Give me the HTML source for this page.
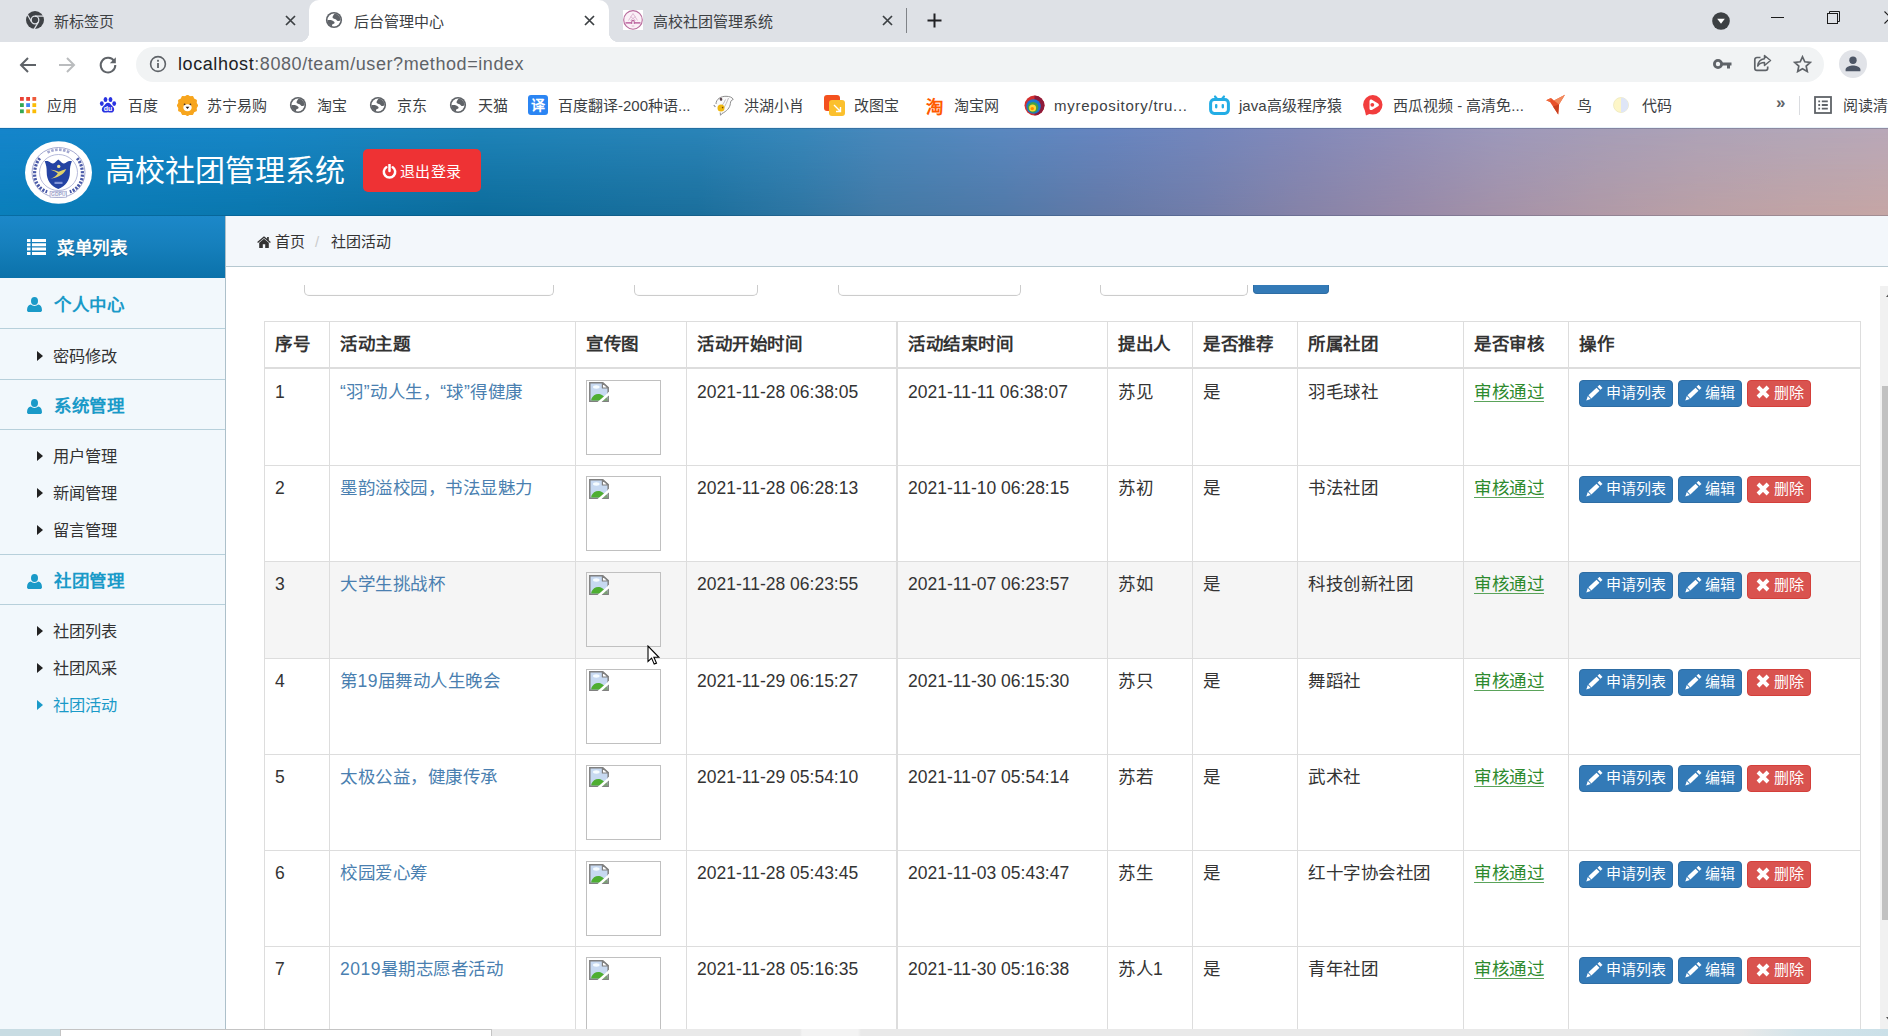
<!DOCTYPE html>
<html lang="zh-CN">
<head>
<meta charset="utf-8">
<title>后台管理中心</title>
<style>
*{box-sizing:border-box;margin:0;padding:0}
html,body{width:1888px;height:1036px;overflow:hidden;background:#fff}
body{position:relative;font-family:"Liberation Sans",sans-serif;color:#333;font-size:17.5px}
.abs{position:absolute}
/* ---------- browser chrome ---------- */
#tabstrip{position:absolute;left:0;top:0;width:1888px;height:42px;background:#dee1e6}
#toolbar{position:absolute;left:0;top:42px;width:1888px;height:46px;background:#fff}
#bookmarks{position:absolute;left:0;top:88px;width:1888px;height:39px;background:#fff}
.tab-title{position:absolute;top:11px;font-size:15px;line-height:22px;color:#3c4043;white-space:nowrap}
.tab-x{position:absolute;top:14px;width:11px;height:11px}
#activetab{position:absolute;left:309px;top:0;width:300px;height:42px;background:#fff;border-radius:10px 10px 0 0}
#activetab:before,#activetab:after{content:"";position:absolute;bottom:0;width:10px;height:10px;background:radial-gradient(circle at 0 0,#dee1e6 10px,#fff 10.5px)}
#activetab:before{left:-10px}
#activetab:after{right:-10px;background:radial-gradient(circle at 100% 0,#dee1e6 10px,#fff 10.5px)}
#urlbox{position:absolute;left:136px;top:5px;width:1688px;height:35px;border-radius:17.5px;background:#f1f3f4}
#url{position:absolute;left:42px;top:5px;font-size:18px;line-height:24px;color:#5f6368;white-space:nowrap;letter-spacing:0.58px}
#url b{font-weight:normal;color:#202124}
.bm{position:absolute;top:7px;font-size:15px;line-height:22px;color:#3c4043;white-space:nowrap}
.bmi{position:absolute;top:7px;width:20px;height:20px}
/* ---------- page ---------- */
#page{position:absolute;left:0;top:127px;width:1888px;height:902px;background:#fff;overflow:hidden}

#hdr{position:absolute;left:0;top:1px;width:1888px;height:88px;background:linear-gradient(to right,#0a7fbb 0%,#0a77ae 13.2%,#0c6c9b 25.4%,#1b6f9c 37%,#2e75a2 42.4%,#4279a5 46.6%,#5079a8 53%,#6379a7 58.3%,#727da9 63.6%,#8683a8 68.9%,#9689a8 74.2%,#a592a8 79.4%,#b19aa7 84.7%,#bba0a6 90%,#c2a4a5 95.3%,#c6a6a5 100%);box-shadow:inset 0 -1px 0 rgba(0,30,60,.18)}
#hdr:before{content:"";position:absolute;inset:0;background:linear-gradient(to right,#1585cb 0%,#1786c6 13.2%,#1e83b8 25.4%,#2a84b8 37%,#3887ba 42.4%,#4888bc 46.6%,#5a88bf 53%,#6685bf 58.3%,#7386bc 63.6%,#8289b9 68.9%,#908fb8 74.2%,#9c98ba 79.4%,#a59db7 84.7%,#ada2b7 90%,#b2a6b8 95.3%,#b8a8b8 100%);-webkit-mask-image:linear-gradient(to bottom,#000 0,rgba(0,0,0,0) 100%);mask-image:linear-gradient(to bottom,#000 0,rgba(0,0,0,0) 100%)}
#hdrline{position:absolute;left:0;top:0;width:1888px;height:2px;background:linear-gradient(to bottom,#e9f2f9 0,#e9f2f9 1px,rgba(10,40,80,.22) 1px,rgba(10,40,80,.22) 2px);z-index:3}
#title{position:absolute;left:105px;top:22px;font-size:30px;line-height:42px;color:#fff;white-space:nowrap;letter-spacing:0}
#logout{position:absolute;left:363px;top:20.500px;width:118px;height:43.500px;border-radius:5px;background:#ee3234;color:#fff;font-size:15px;line-height:46px;white-space:nowrap;letter-spacing:.3px}
#side{position:absolute;left:0;top:89px;width:226px;height:813px;background:#f2f8fc;border-right:1px solid #adc0ca}
#menuhd{position:absolute;left:0;top:0;width:225px;height:62px;background:linear-gradient(to bottom,#1c88c9 0,#1680bd 45%,#0b72aa 100%);color:#fff;font-weight:bold;font-size:17.5px;line-height:62px;letter-spacing:.5px}
.sec{position:absolute;left:0;width:225px;height:51px;border-bottom:1px solid #b7d0db;color:#1a9ac8;font-weight:bold;font-size:17.5px;line-height:54px;padding-left:54px;white-space:nowrap;letter-spacing:.5px}
.sec.bt{border-top:1px solid #b7d0db;height:51px;line-height:53px}
.sub{position:absolute;left:53px;font-size:16.25px;line-height:24px;color:#333;white-space:nowrap}
.sub:before{content:"";position:absolute;left:-16px;top:7px;border-left:6px solid #222;border-top:5px solid transparent;border-bottom:5px solid transparent}
.sub.on{color:#1a9ac8}.sub.on:before{border-left-color:#1a9ac8}
#crumb{position:absolute;left:226px;top:89px;width:1662px;height:51px;background:#f3f7fb;border-bottom:1px solid #b6c8d0;font-size:15px;color:#333}
#main{position:absolute;left:226px;top:140px;width:1654px;height:762px;background:#fff;overflow:hidden}
.inp{position:absolute;top:18px;height:11px;border:1px solid #ccc;border-top:0;border-radius:0 0 5px 5px;background:#fff;box-shadow:inset 0 -1px 1px rgba(0,0,0,.02)}
table{position:absolute;left:38px;top:54px;border-collapse:collapse;table-layout:fixed;width:1597px;font-size:17.5px;line-height:25px;color:#333}
td,th{border:1px solid #ddd;padding:11px 10px 7px;vertical-align:top;text-align:left;white-space:nowrap;overflow:hidden}
th{font-weight:bold;height:46px;border-bottom:2px solid #ddd;padding:10px 10px 7px}
tbody tr{height:96.25px}tbody tr:first-child{height:98.100px}tbody tr:not(:first-child) td{padding-top:10px}
tr.hov td{background:#f5f5f5}
td,th{letter-spacing:.5px}td:nth-child(1),td:nth-child(4),td:nth-child(5){letter-spacing:0}td a{color:#4a7fb0;text-decoration:none}
td a.g{color:#2d8a2d;text-decoration:underline;text-decoration-thickness:1px;text-underline-offset:2.500px;text-decoration-color:#5aa35a}
.img{display:block;width:75px;height:75px;border:1px solid #c0c0c0;position:relative;margin-top:0}
.btn{letter-spacing:0;display:inline-block;height:27px;line-height:23px;border-radius:4px;color:#fff;font-size:15px;padding:0 6.5px;margin-right:5px;vertical-align:top;margin-top:0;border:1px solid}
.b1{background:#337ab7;border-color:#2e6da4}.b2{background:#d9534f;border-color:#d43f3a}

#vscroll{position:absolute;left:1880px;top:286px;width:8px;height:743px;background:#f1f1f1}
#vscroll:before{content:"";position:absolute;left:2px;top:100px;width:6px;height:534px;background:#c1c1c1}
#bottom{position:absolute;left:0;top:1029px;width:1888px;height:7px;background:linear-gradient(to right,#c8dce3 0,#c8dce3 60px,#e9e9e9 60px,#e9e9e9 800px,#f3f3f3 802px,#f3f3f3 858px,#e9e9e9 861px,#e9e9e9 1740px,#d3e4ea 1800px,#cbe0e8 1888px)}
#bottom:before{content:"";position:absolute;left:60px;top:0;width:430px;height:7px;background:#fff;border:1px solid #c4c4c4;border-bottom:0}
</style>
</head>
<body>
<div id="tabstrip">
  <div id="activetab"></div>
  <!-- tab 1 -->
  <svg class="abs" style="left:25px;top:10px" width="20" height="20" viewBox="0 0 20 20"><circle cx="10" cy="10" r="9" fill="#3f4246"/><g stroke="#dee1e6" stroke-width="1.300" fill="none"><path d="M10 6.100H19.500"/><path d="M10 6.100H19.500" transform="rotate(120 10 10)"/><path d="M10 6.100H19.500" transform="rotate(240 10 10)"/><circle cx="10" cy="10" r="3.800"/></g></svg>
  <div class="tab-title" style="left:54px">新标签页</div>
  <svg class="abs" style="left:285px;top:15px" width="11" height="11" viewBox="0 0 11 11"><path d="M1 1l9 9M10 1l-9 9" stroke="#3c4043" stroke-width="1.7" fill="none"/></svg>
  <!-- tab 2 -->
  <svg class="abs" style="left:325px;top:11px" width="18" height="18" viewBox="0 0 20 20"><circle cx="10" cy="10" r="9" fill="#5f6368"/><circle cx="10" cy="10" r="7.200" fill="#fff"/><path d="M10.800 2.800C9.500 4.500 8.100 6 8.400 7.300c.3 1.300 2.100 1.300 3.400 1.900 1.200.6 1.200 1.800 2.400 2 1.300.2 2.400-.5 3.100-1.200A7.300 7.300 0 0 0 10.800 2.800z" fill="#5f6368"/><path d="M2.700 10.200C4.500 10 6.500 10 8 10.500c1.500.5 2.600 1.300 2.700 2.500.1 1-1.700 1-2.400 1.800-.6.700-.5 1.400-.3 2.300A7.300 7.300 0 0 1 2.700 10.200z" fill="#5f6368"/></svg>
  <div class="tab-title" style="left:354px">后台管理中心</div>
  <svg class="abs" style="left:584px;top:15px" width="11" height="11" viewBox="0 0 11 11"><path d="M1 1l9 9M10 1l-9 9" stroke="#3c4043" stroke-width="1.7" fill="none"/></svg>
  <!-- tab 3 -->
  <div class="abs" style="left:623px;top:10px;width:20px;height:20px;background:#fff"></div>
  <svg class="abs" style="left:623px;top:10px" width="20" height="20" viewBox="0 0 20 20"><circle cx="10" cy="9.900" r="9.300" fill="#fbf0f7" stroke="#b86c9d" stroke-width="1.100"/><path d="M10 3.500L5.500 10.500M10 3.500l4.500 7M7.500 6.500l5 4M12.500 6.500l-5 4" fill="none" stroke="#dcb3cf" stroke-width=".9"/><path d="M2.500 12h15v1.700h-15z" fill="#c678ac"/><path d="M8.300 14v-3.300c0-1 3.400-1 3.400 0V14z" fill="#b9639c"/><rect x="9.300" y="11.300" width="1.400" height="2.700" fill="#fff"/><rect x="8.700" y="15.600" width="2.600" height=".8" fill="#d9a9c6"/></svg>
  <div class="tab-title" style="left:653px">高校社团管理系统</div>
  <svg class="abs" style="left:882px;top:15px" width="11" height="11" viewBox="0 0 11 11"><path d="M1 1l9 9M10 1l-9 9" stroke="#3c4043" stroke-width="1.7" fill="none"/></svg>
  <div class="abs" style="left:906px;top:8px;width:1px;height:25px;background:#808388"></div>
  <svg class="abs" style="left:927px;top:13px" width="15" height="15" viewBox="0 0 15 15"><path d="M7.500 .5v14M.5 7.500h14" stroke="#202124" stroke-width="2" fill="none"/></svg>
  <!-- window controls -->
  <svg class="abs" style="left:1712px;top:12px" width="18" height="18" viewBox="0 0 18 18"><circle cx="9" cy="9" r="8.800" fill="#3c4043"/><path d="M5.200 6.800h7.600L9 11.800z" fill="#fff"/></svg>
  <div class="abs" style="left:1771px;top:17px;width:13px;height:1px;background:#1b1b1b"></div>
  <svg class="abs" style="left:1826px;top:10px" width="15" height="15" viewBox="0 0 15 15"><path d="M3.500 3.500V1.500h10v10h-2" fill="none" stroke="#1b1b1b" stroke-width="1"/><rect x="1.500" y="3.500" width="10" height="10" fill="none" stroke="#1b1b1b" stroke-width="1"/></svg>
  <svg class="abs" style="left:1884px;top:11px" width="13" height="13" viewBox="0 0 13 13"><path d="M.5 .5l12 12M12.500 .5l-12 12" stroke="#1b1b1b" stroke-width="1.100" fill="none"/></svg>
</div>
<div id="toolbar">
  <svg class="abs" style="left:18px;top:13px" width="20" height="20" viewBox="0 0 20 20"><path d="M18 10H3.500M10 3l-7 7 7 7" stroke="#5f6368" stroke-width="2" fill="none"/></svg>
  <svg class="abs" style="left:57px;top:13px" width="20" height="20" viewBox="0 0 20 20"><path d="M2 10h14.500M10 3l7 7-7 7" stroke="#babcbe" stroke-width="2" fill="none"/></svg>
  <svg class="abs" style="left:98px;top:13px" width="20" height="20" viewBox="0 0 20 20"><path d="M16.200 6.300A7.300 7.300 0 1 0 17.300 10" stroke="#5f6368" stroke-width="2" fill="none"/><path d="M17.800 2.200v6h-6z" fill="#5f6368"/></svg>
  <div id="urlbox">
    <svg class="abs" style="left:13px;top:8px" width="18" height="18" viewBox="0 0 18 18"><circle cx="9" cy="9" r="7.400" fill="none" stroke="#5f6368" stroke-width="1.600"/><rect x="8.100" y="8" width="1.800" height="5" fill="#5f6368"/><rect x="8.100" y="4.800" width="1.800" height="1.900" fill="#5f6368"/></svg>
    <div id="url"><b>localhost</b>:8080/team/user?method=index</div>
    <!-- key -->
    <svg class="abs" style="left:1577px;top:9px" width="19" height="17" viewBox="0 0 19 17"><circle cx="5" cy="8" r="3.600" fill="none" stroke="#5f6368" stroke-width="2.800"/><path d="M8 6.600h10.500v3H17v3h-3v-3H8z" fill="#5f6368"/></svg>
    <!-- share -->
    <svg class="abs" style="left:1617px;top:7px" width="19" height="19" viewBox="0 0 19 19"><path d="M7.500 3.500H4a2.200 2.200 0 0 0-2.200 2.200v8.500A2.200 2.200 0 0 0 4 16.400h8.500a2.200 2.200 0 0 0 2.200-2.200V12.500" fill="none" stroke="#5f6368" stroke-width="1.700"/><path d="M11.500 1.500L17.500 6.500l-6 5V8.500c-3.500 0-5.500 1.300-6.800 3.500.3-3.800 2.600-6.800 6.800-7.300z" fill="none" stroke="#5f6368" stroke-width="1.500" stroke-linejoin="round"/></svg>
    <!-- star -->
    <svg class="abs" style="left:1657px;top:8px" width="19" height="18" viewBox="0 0 19 18"><path d="M9.500 1.800l2.300 5 5.400.6-4 3.700 1.100 5.400-4.800-2.700-4.800 2.700 1.100-5.400-4-3.700 5.400-.6z" fill="none" stroke="#5f6368" stroke-width="1.700" stroke-linejoin="miter"/></svg>
  </div>
  <!-- avatar -->
  <div class="abs" style="left:1839px;top:8px;width:28px;height:28px;border-radius:50%;background:#e1e3e8"></div>
  <svg class="abs" style="left:1844px;top:13px" width="18" height="18" viewBox="0 0 18 18"><circle cx="9" cy="5.300" r="3.700" fill="#4d5666"/><path d="M1.600 16.200v-1.700c0-2.700 4.900-4 7.400-4s7.400 1.300 7.400 4v1.700z" fill="#4d5666"/></svg>
</div>
<div id="bookmarks">
  <svg class="abs" style="left:20px;top:8.500px" width="17" height="17" viewBox="0 0 17 17"><rect x="0.0" y="0.0" width="3.800" height="3.800" fill="#ea4335"/><rect x="6.2" y="0.0" width="3.800" height="3.800" fill="#ea4335"/><rect x="12.4" y="0.0" width="3.800" height="3.800" fill="#ee5a3a"/><rect x="0.0" y="6.2" width="3.800" height="3.800" fill="#34a853"/><rect x="6.2" y="6.2" width="3.800" height="3.800" fill="#4285f4"/><rect x="12.4" y="6.2" width="3.800" height="3.800" fill="#fbbc05"/><rect x="0.0" y="12.4" width="3.800" height="3.800" fill="#34a853"/><rect x="6.2" y="12.4" width="3.800" height="3.800" fill="#f2a01f"/><rect x="12.4" y="12.4" width="3.800" height="3.800" fill="#fbbc05"/></svg>
  <div class="bm" style="left:47px">应用</div>
  <!-- baidu -->
  <svg class="abs" style="left:99px;top:8px" width="18" height="18" viewBox="0 0 18 18"><ellipse cx="2.800" cy="7.600" rx="1.900" ry="2.400" fill="#2932e1"/><ellipse cx="6.500" cy="3.400" rx="1.900" ry="2.500" fill="#2932e1"/><ellipse cx="11.500" cy="3.400" rx="1.900" ry="2.500" fill="#2932e1"/><ellipse cx="15.200" cy="7.600" rx="1.900" ry="2.400" fill="#2932e1"/><path d="M9 6.800c2.100 0 2.900 2 4.800 3.700 1.700 1.600 1.900 4 .3 5.400-1.400 1.200-3.200.4-5.100.4s-3.700.8-5.100-.4c-1.600-1.400-1.400-3.800.3-5.400C6.100 8.800 6.900 6.800 9 6.800z" fill="#2932e1"/><text x="9" y="15.300" font-family="Liberation Sans" font-size="7" font-weight="bold" fill="#fff" text-anchor="middle">du</text></svg>
  <div class="bm" style="left:128px">百度</div>
  <!-- suning lion -->
  <svg class="abs" style="left:177px;top:7px" width="21" height="21" viewBox="0 0 21 21"><path d="M10.500 .3l2.300 1.500 2.800-.2 1.200 2.500 2.500 1.200-.2 2.800 1.500 2.400-1.500 2.300.2 2.800-2.500 1.200-1.200 2.500-2.800-.2-2.300 1.500-2.300-1.500-2.800.2-1.200-2.500-2.500-1.200.2-2.800L.4 10.500l1.500-2.400-.2-2.800 2.500-1.200 1.200-2.500 2.800.2z" fill="#f7a51d" stroke="#f7a51d" stroke-width="1.200" stroke-linejoin="round"/><path d="M6.300 12.500c0-2 1.800-3.200 4.200-3.200s4.200 1.200 4.200 3.200c0 2.200-1.900 3.800-4.200 3.800s-4.200-1.600-4.200-3.800z" fill="#fff"/><circle cx="7.600" cy="9.300" r=".9" fill="#4a3222"/><circle cx="13.400" cy="9.300" r=".9" fill="#4a3222"/><path d="M8.600 11.800h3.800l-1.900 2.200z" fill="#2a1a10"/></svg>
  <div class="bm" style="left:207px">苏宁易购</div>
  <svg class="abs" style="left:289px;top:8px" width="18" height="18" viewBox="0 0 20 20"><circle cx="10" cy="10" r="9" fill="#5f6368"/><circle cx="10" cy="10" r="7.200" fill="#fff"/><path d="M10.800 2.800C9.500 4.500 8.100 6 8.400 7.300c.3 1.300 2.100 1.300 3.400 1.900 1.200.6 1.200 1.800 2.400 2 1.300.2 2.400-.5 3.100-1.200A7.300 7.300 0 0 0 10.800 2.800z" fill="#5f6368"/><path d="M2.700 10.200C4.500 10 6.500 10 8 10.500c1.500.5 2.600 1.300 2.700 2.500.1 1-1.700 1-2.400 1.800-.6.700-.5 1.400-.3 2.300A7.300 7.300 0 0 1 2.700 10.200z" fill="#5f6368"/></svg><div class="bm" style="left:317px">淘宝</div>
  <svg class="abs" style="left:369px;top:8px" width="18" height="18" viewBox="0 0 20 20"><circle cx="10" cy="10" r="9" fill="#5f6368"/><circle cx="10" cy="10" r="7.200" fill="#fff"/><path d="M10.800 2.800C9.500 4.500 8.100 6 8.400 7.300c.3 1.300 2.100 1.300 3.400 1.900 1.200.6 1.200 1.800 2.400 2 1.300.2 2.400-.5 3.100-1.200A7.300 7.300 0 0 0 10.800 2.800z" fill="#5f6368"/><path d="M2.700 10.200C4.500 10 6.500 10 8 10.500c1.500.5 2.600 1.300 2.700 2.500.1 1-1.700 1-2.400 1.800-.6.700-.5 1.400-.3 2.300A7.300 7.300 0 0 1 2.700 10.200z" fill="#5f6368"/></svg><div class="bm" style="left:397px">京东</div>
  <svg class="abs" style="left:449px;top:8px" width="18" height="18" viewBox="0 0 20 20"><circle cx="10" cy="10" r="9" fill="#5f6368"/><circle cx="10" cy="10" r="7.200" fill="#fff"/><path d="M10.800 2.800C9.500 4.500 8.100 6 8.400 7.300c.3 1.300 2.100 1.300 3.400 1.900 1.200.6 1.200 1.800 2.400 2 1.300.2 2.400-.5 3.100-1.200A7.300 7.300 0 0 0 10.800 2.800z" fill="#5f6368"/><path d="M2.700 10.200C4.500 10 6.500 10 8 10.500c1.500.5 2.600 1.300 2.700 2.500.1 1-1.700 1-2.400 1.800-.6.700-.5 1.400-.3 2.300A7.300 7.300 0 0 1 2.700 10.200z" fill="#5f6368"/></svg><div class="bm" style="left:478px">天猫</div>
  <!-- baidu fanyi -->
  <div class="abs" style="left:528px;top:7px;width:20px;height:20px;border-radius:3px;background:#2b85f3;color:#fff;font-size:14px;line-height:20px;text-align:center;font-weight:bold">译</div>
  <div class="bm" style="left:558px">百度翻译-200种语...</div>
  <!-- honghu -->
  <svg class="abs" style="left:713px;top:7px" width="22" height="21" viewBox="0 0 22 21"><path d="M3 9C3 4 8 1.200 13 1.300c3.500 0 6.500 1 7.200 3.200-1.800.5-2.700 1.800-2.800 3.800-.3 4.500-3.800 8-8.400 10.200L7.500 20.300 7.200 17.500" fill="#fafafa" stroke="#8f8f8f" stroke-width="1"/><path d="M12.500 4.500C11 8 9.500 10 8 11.500M15.500 3C14 7 12.500 10.500 10 14" fill="none" stroke="#b9b4b8" stroke-width=".9"/><ellipse cx="8" cy="4.300" rx="1.300" ry="1.600" fill="#5c4750" transform="rotate(-20 8 4.300)"/><circle cx="8" cy="13" r="3.500" fill="#efb810"/><circle cx="9.600" cy="12.600" r=".8" fill="#7a4a00"/><path d="M.8 10l1.600 2" stroke="#8a8a9a" stroke-width="1.200"/></svg>
  <div class="bm" style="left:744px">洪湖小肖</div>
  <!-- gaitubao -->
  <div class="abs" style="left:824px;top:7px;width:16px;height:16px;border-radius:3px;background:#f4511e"></div>
  <div class="abs" style="left:829px;top:12px;width:16px;height:16px;border-radius:3px;background:#fbc02d"></div>
  <svg class="abs" style="left:833px;top:16px" width="9" height="9" viewBox="0 0 9 9"><path d="M1 1l6 6M3 7.500h4.500V3" stroke="#fff" stroke-width="1.400" fill="none"/></svg>
  <!-- tao -->
  <div class="bm" style="left:854px">改图宝</div>
  <div class="abs" style="left:924px;top:7.500px;width:20px;height:22px;color:#ff5a00;font-size:17.500px;line-height:22px;font-weight:bold;text-align:center">淘</div>
  <div class="bm" style="left:954px">淘宝网</div>
  <!-- myrepository -->
  <svg class="abs" style="left:1024px;top:7px" width="21" height="21" viewBox="0 0 21 21"><circle cx="10.500" cy="10.500" r="10" fill="#d32f2f"/><path d="M10.500 .5a10 10 0 0 1 0 20z" fill="#8e1b3a"/><circle cx="9.500" cy="11.500" r="7.300" fill="#1976d2"/><circle cx="9" cy="12.300" r="5.400" fill="#43a047"/><circle cx="8.600" cy="13" r="3.500" fill="#fdd835"/><circle cx="8.300" cy="13.600" r="1.700" fill="#fb8c00"/></svg>
  <div class="bm" style="left:1054px;letter-spacing:.72px">myrepository/tru...</div>
  <!-- bilibili-like -->
  <svg class="abs" style="left:1209px;top:6px" width="21" height="22" viewBox="0 0 21 22"><path d="M6 2.500l2.500 3M15 2.500l-2.500 3" stroke="#23ade5" stroke-width="2.200" stroke-linecap="round"/><rect x="1.600" y="5.600" width="17.800" height="13.800" rx="3.600" fill="#fff" stroke="#23ade5" stroke-width="3"/><rect x="6" y="10" width="2.400" height="4.400" rx="1.100" fill="#23ade5"/><rect x="12.600" y="10" width="2.400" height="4.400" rx="1.100" fill="#23ade5"/></svg>
  <div class="bm" style="left:1239px">java高级程序猿</div>
  <!-- xigua -->
  <svg class="abs" style="left:1362px;top:7px" width="21" height="21" viewBox="0 0 21 21"><circle cx="10.800" cy="9.800" r="9.700" fill="#f23d3d"/><path d="M2.500 14l1.500 6.500 5.500-2.500z" fill="#f23d3d"/><path d="M7.500 6.200c0-1.300 1.300-2 2.400-1.400l6.200 3.600c1.100.7 1.100 2.200 0 2.900l-6.200 3.600c-1.100.6-2.400-.1-2.400-1.400z" fill="#fff"/><circle cx="10.300" cy="9.800" r="1.900" fill="#f23d3d"/></svg>
  <div class="bm" style="left:1393px">西瓜视频 - 高清免...</div>
  <!-- bird -->
  <svg class="abs" style="left:1545px;top:6px" width="21" height="22" viewBox="0 0 21 22"><path d="M1.200 6.200L6 4l3 2.500L20 .8l-6 9.700 -.8 10L8 12.500 5 8z" fill="#e8512a"/><path d="M9 6.500L20 .8l-6 9.700z" fill="#f28a5c"/><path d="M14 10.500l-.8 10L8 12.500z" fill="#c93f1d"/><path d="M1.200 6.200L6 4l-1 4z" fill="#f06a3c"/></svg>
  <div class="bm" style="left:1577px">鸟</div>
  <!-- daima -->
  <svg class="abs" style="left:1613px;top:9px" width="16" height="16" viewBox="0 0 16 16"><circle cx="8" cy="8" r="7.500" fill="#fdf6c8" stroke="#e8e2b4" stroke-width=".6"/><path d="M8 .5a7.500 7.500 0 0 1 0 15z" fill="#dfe6f7"/></svg>
  <div class="bm" style="left:1642px">代码</div>
  <div class="abs" style="left:1776px;top:4px;font-size:17px;line-height:22px;color:#5f6368;font-weight:bold">»</div>
  <div class="abs" style="left:1799px;top:8px;width:1px;height:19px;background:#dadce0"></div>
  <svg class="abs" style="left:1814px;top:8px" width="18" height="18" viewBox="0 0 18 18"><rect x="1" y="1" width="16" height="16" fill="none" stroke="#5f6368" stroke-width="1.800"/><path d="M4.300 5.300h1.800M4.300 9h1.800M4.300 12.700h1.800" stroke="#5f6368" stroke-width="1.800"/><path d="M7.800 5.300h6M7.800 9h6M7.800 12.700h6" stroke="#5f6368" stroke-width="1.800"/></svg>
  <div class="bm" style="left:1843px">阅读清单</div>
</div>
<div id="page">
  <div id="hdrline"></div>
  <div id="hdr">
    <svg class="abs" style="left:25px;top:12.500px" width="67" height="63" viewBox="0 0 67 63">
      <ellipse cx="33.500" cy="31.500" rx="33.500" ry="31.300" fill="#fff"/>
      <ellipse cx="33.500" cy="31.500" rx="26.500" ry="25" fill="none" stroke="#9a9fca" stroke-width=".9"/>
      <ellipse cx="33.500" cy="31.500" rx="19" ry="18" fill="none" stroke="#a3a8d0" stroke-width=".8"/>
      <path d="M14.800 17.200C9 24 8 36 12 42.500 14.500 47 18 49.500 22.200 50.800" fill="none" stroke="#4a5aa8" stroke-width="3.200" stroke-dasharray="2.200 1.300"/>
      <path d="M52.200 17.200C58 24 59 36 55 42.500 52.500 47 49 49.500 44.800 50.800" fill="none" stroke="#4a5aa8" stroke-width="3.200" stroke-dasharray="2.200 1.300"/>
      <path d="M19.700 20.200c2.500-.3 4.500 0 6 1.600 1.500 1 2.800 1 4 0 1.300-1.200 2.400-2.300 3.600-3.300 1.200 1 2.300 2.100 3.600 3.300 1.200 1 2.500 1 4 0 1.500-1.600 3.500-1.900 6-1.600-1.600 3.500-2 7-2 11 0 8-4 13.500-11.600 16.800C25.700 44.700 21.700 39.200 21.700 31.200c0-4-.4-7.500-2-11z" fill="#2443a3"/>
      <circle cx="33.700" cy="25.400" r="1.700" fill="#f0e6a0"/>
      <path d="M25.500 28.700c4 .3 6.500 1.200 8.200 2 2.500-1.200 5-2.200 7.600-2.800-1.500 3-4 5.600-7 7.200-2.600 1.500-5.500 2.400-8.800 2.600 3.500-1.300 6-3.300 7.300-5.300-2-1.800-4.300-2.900-7.300-3.700z" fill="#e2d26a"/>
      <rect x="29.500" y="40.800" width="8" height="2.200" fill="#7f93d6"/>
      <rect x="25.100" y="50.300" width="16.400" height="5.900" fill="#fff" stroke="#9a9fca" stroke-width=".7"/>
      <text x="33.300" y="55.200" font-family="Liberation Sans" font-size="5" font-weight="bold" fill="#9a9fca" text-anchor="middle">GDPU</text>
      <path d="M22.500 11.500c7-3.800 15-3.800 22 0" stroke="#a3a8d0" stroke-width="2.600" fill="none" stroke-dasharray="2.600 1.400"/>
    </svg>
    <div id="title">高校社团管理系统</div>
    <div id="logout"><svg class="abs" style="left:19px;top:15.500px" width="15" height="15" viewBox="0 0 15 15"><path d="M4.300 3.200A5.700 5.700 0 1 0 10.700 3.200" stroke="#fff" stroke-width="2.500" fill="none" stroke-linecap="round"/><path d="M7.500 .8v6.200" stroke="#fff" stroke-width="2.500" stroke-linecap="round"/></svg><span style="position:absolute;left:37px;top:0">退出登录</span></div>
  </div>
  <div id="side">
    <div id="menuhd">
      <svg class="abs" style="left:27px;top:23px" width="19" height="16" viewBox="0 0 19 16"><path d="M0 0h3.500v3H0zM5 0h14v3H5zM0 4.300h3.500v3H0zM5 4.300h14v3H5zM0 8.600h3.500v3H0zM5 8.600h14v3H5zM0 12.900h3.500v3H0zM5 12.900h14v3H5z" fill="#fff"/></svg>
      <span style="position:absolute;left:57px;top:1px;text-shadow:0 1px 1px rgba(0,0,0,.25)">菜单列表</span>
    </div>
    <div class="sec" style="top:62px"><svg class="abs" style="left:27px;top:19px" width="15" height="15" viewBox="0 0 15 15"><ellipse cx="7.500" cy="4" rx="3.500" ry="3.900" fill="#1a9ac8"/><path d="M0 13.200c0-3.500 1.800-5.600 3.800-5.700 1 .9 2.200 1.400 3.700 1.400s2.700-.5 3.700-1.400c2 .1 3.800 2.200 3.800 5.700 0 1.200-.9 1.800-2 1.800H2c-1.100 0-2-.6-2-1.800z" fill="#1a9ac8"/></svg>个人中心</div>
    <div class="sub" style="top:128px">密码修改</div>
    <div class="sec bt" style="top:163px"><svg class="abs" style="left:27px;top:19px" width="15" height="15" viewBox="0 0 15 15"><ellipse cx="7.500" cy="4" rx="3.500" ry="3.900" fill="#1a9ac8"/><path d="M0 13.200c0-3.500 1.800-5.600 3.800-5.700 1 .9 2.200 1.400 3.700 1.400s2.700-.5 3.700-1.400c2 .1 3.800 2.200 3.800 5.700 0 1.200-.9 1.800-2 1.800H2c-1.100 0-2-.6-2-1.800z" fill="#1a9ac8"/></svg>系统管理</div>
    <div class="sub" style="top:228px">用户管理</div>
    <div class="sub" style="top:265px">新闻管理</div>
    <div class="sub" style="top:302px">留言管理</div>
    <div class="sec bt" style="top:338px"><svg class="abs" style="left:27px;top:19px" width="15" height="15" viewBox="0 0 15 15"><ellipse cx="7.500" cy="4" rx="3.500" ry="3.900" fill="#1a9ac8"/><path d="M0 13.200c0-3.500 1.800-5.600 3.800-5.700 1 .9 2.200 1.400 3.700 1.400s2.700-.5 3.700-1.400c2 .1 3.800 2.200 3.800 5.700 0 1.200-.9 1.800-2 1.800H2c-1.100 0-2-.6-2-1.800z" fill="#1a9ac8"/></svg>社团管理</div>
    <div class="sub" style="top:403px">社团列表</div>
    <div class="sub" style="top:440px">社团风采</div>
    <div class="sub on" style="top:477px">社团活动</div>
  </div>
  <div id="crumb">
    <svg class="abs" style="left:31px;top:20px" width="14" height="12" viewBox="0 0 14 12"><path d="M7 .3L.2 6l.8 1L7 2l6 5 .8-1-2-1.700V1h-1.700v1.800zM2.200 6.800V12h3.600V8.300h2.400V12h3.600V6.800L7 2.800z" fill="#333"/></svg>
    <span class="abs" style="left:49px;top:15px;line-height:22px">首页</span>
    <span class="abs" style="left:89px;top:15px;line-height:22px;color:#ccc">/</span>
    <span class="abs" style="left:105px;top:15px;line-height:22px">社团活动</span>
  </div>
  <div id="main">
    <div class="inp" style="left:78px;width:250px"></div>
    <div class="inp" style="left:408px;width:124px"></div>
    <div class="inp" style="left:612px;width:183px"></div>
    <div class="inp" style="left:874px;width:148px"></div>
    <div class="abs" style="left:1027px;top:18px;width:76px;height:9px;background:#337ab7;border:1px solid #2e6da4;border-top:0;border-radius:0 0 4px 4px"></div>
    <div class="abs" style="left:670px;top:54px;width:1px;height:720px;background:#ddd;z-index:2"></div>
    <table><colgroup><col style="width:65px"><col style="width:246px"><col style="width:111px"><col style="width:211px"><col style="width:210px"><col style="width:85px"><col style="width:105px"><col style="width:166px"><col style="width:105px"><col style="width:292px"></colgroup><thead><tr><th>序号</th><th>活动主题</th><th>宣传图</th><th>活动开始时间</th><th>活动结束时间</th><th>提出人</th><th>是否推荐</th><th>所属社团</th><th>是否审核</th><th>操作</th></tr></thead><tbody>
<tr><td>1</td><td><a>“羽”动人生，“球”得健康</a></td><td><span class="img"><svg class="abs" style="left:2px;top:1.500px" width="20" height="20" viewBox="0 0 20 20"><path d="M.8 .8h12.900l5.500 4.900v13.500H.8z" fill="#c7d9f1" stroke="#808080" stroke-width="1.500" stroke-linejoin="miter"/><path d="M13.400 .8v5.200h5.800z" fill="#fff" stroke="#808080" stroke-width="1.200" stroke-linejoin="round"/><ellipse cx="7.300" cy="5" rx="3.300" ry="1.700" fill="#f6fcff"/><path d="M2.300 18.500v-1.500c1.500-3.500 4.500-5.500 8-5 1.500.2 2.800 1 4 2l4 3.200v1.300z" fill="#4eae32"/><path d="M14 18.500l4.300-4v4z" fill="#7e9a76"/><path d="M8 20.500L20.500 9.500v3.300L12 20.500z" fill="#fff"/><path d="M19.500 10.200l1 -.9v4l-1 .8z" fill="#fff"/></svg></span></td><td>2021-11-28 06:38:05</td><td>2021-11-11 06:38:07</td><td>苏见</td><td>是</td><td>羽毛球社</td><td><a class="g">审核通过</a></td><td><span class="btn b1"><svg width="17" height="16" viewBox="0 0 17 16" style="vertical-align:-3px;margin-right:3px;margin-left:-1px"><path d="M3.900 11.900L12 4.200" stroke="#fff" stroke-width="4.300" fill="none"/><path d="M13 3.300l2-1.900" stroke="#fff" stroke-width="4.300" fill="none"/><path d="M.3 15.500l1.500-4.600 3 3.200z" fill="#fff"/></svg>申请列表</span><span class="btn b1"><svg width="17" height="16" viewBox="0 0 17 16" style="vertical-align:-3px;margin-right:3px;margin-left:-1px"><path d="M3.900 11.900L12 4.200" stroke="#fff" stroke-width="4.300" fill="none"/><path d="M13 3.300l2-1.900" stroke="#fff" stroke-width="4.300" fill="none"/><path d="M.3 15.500l1.500-4.600 3 3.200z" fill="#fff"/></svg>编辑</span><span class="btn b2"><svg width="14" height="14" viewBox="0 0 14 14" style="vertical-align:-1.500px;margin-right:4px;margin-left:1px"><path d="M2 2l10 10M12 2L2 12" stroke="#fff" stroke-width="3.900" fill="none"/></svg>删除</span></td></tr>
<tr><td>2</td><td><a>墨韵溢校园，书法显魅力</a></td><td><span class="img"><svg class="abs" style="left:2px;top:1.500px" width="20" height="20" viewBox="0 0 20 20"><path d="M.8 .8h12.900l5.500 4.900v13.500H.8z" fill="#c7d9f1" stroke="#808080" stroke-width="1.500" stroke-linejoin="miter"/><path d="M13.400 .8v5.200h5.800z" fill="#fff" stroke="#808080" stroke-width="1.200" stroke-linejoin="round"/><ellipse cx="7.300" cy="5" rx="3.300" ry="1.700" fill="#f6fcff"/><path d="M2.300 18.500v-1.500c1.500-3.500 4.500-5.500 8-5 1.500.2 2.800 1 4 2l4 3.200v1.300z" fill="#4eae32"/><path d="M14 18.500l4.300-4v4z" fill="#7e9a76"/><path d="M8 20.500L20.500 9.500v3.300L12 20.500z" fill="#fff"/><path d="M19.500 10.200l1 -.9v4l-1 .8z" fill="#fff"/></svg></span></td><td>2021-11-28 06:28:13</td><td>2021-11-10 06:28:15</td><td>苏初</td><td>是</td><td>书法社团</td><td><a class="g">审核通过</a></td><td><span class="btn b1"><svg width="17" height="16" viewBox="0 0 17 16" style="vertical-align:-3px;margin-right:3px;margin-left:-1px"><path d="M3.900 11.900L12 4.200" stroke="#fff" stroke-width="4.300" fill="none"/><path d="M13 3.300l2-1.900" stroke="#fff" stroke-width="4.300" fill="none"/><path d="M.3 15.500l1.500-4.600 3 3.200z" fill="#fff"/></svg>申请列表</span><span class="btn b1"><svg width="17" height="16" viewBox="0 0 17 16" style="vertical-align:-3px;margin-right:3px;margin-left:-1px"><path d="M3.900 11.900L12 4.200" stroke="#fff" stroke-width="4.300" fill="none"/><path d="M13 3.300l2-1.900" stroke="#fff" stroke-width="4.300" fill="none"/><path d="M.3 15.500l1.500-4.600 3 3.200z" fill="#fff"/></svg>编辑</span><span class="btn b2"><svg width="14" height="14" viewBox="0 0 14 14" style="vertical-align:-1.500px;margin-right:4px;margin-left:1px"><path d="M2 2l10 10M12 2L2 12" stroke="#fff" stroke-width="3.900" fill="none"/></svg>删除</span></td></tr>
<tr class="hov"><td>3</td><td><a>大学生挑战杯</a></td><td><span class="img"><svg class="abs" style="left:2px;top:1.500px" width="20" height="20" viewBox="0 0 20 20"><path d="M.8 .8h12.900l5.500 4.900v13.500H.8z" fill="#c7d9f1" stroke="#808080" stroke-width="1.500" stroke-linejoin="miter"/><path d="M13.400 .8v5.200h5.800z" fill="#fff" stroke="#808080" stroke-width="1.200" stroke-linejoin="round"/><ellipse cx="7.300" cy="5" rx="3.300" ry="1.700" fill="#f6fcff"/><path d="M2.300 18.500v-1.500c1.500-3.500 4.500-5.500 8-5 1.500.2 2.800 1 4 2l4 3.200v1.300z" fill="#4eae32"/><path d="M14 18.500l4.300-4v4z" fill="#7e9a76"/><path d="M8 20.500L20.500 9.500v3.300L12 20.500z" fill="#fff"/><path d="M19.500 10.200l1 -.9v4l-1 .8z" fill="#fff"/></svg></span></td><td>2021-11-28 06:23:55</td><td>2021-11-07 06:23:57</td><td>苏如</td><td>是</td><td>科技创新社团</td><td><a class="g">审核通过</a></td><td><span class="btn b1"><svg width="17" height="16" viewBox="0 0 17 16" style="vertical-align:-3px;margin-right:3px;margin-left:-1px"><path d="M3.900 11.900L12 4.200" stroke="#fff" stroke-width="4.300" fill="none"/><path d="M13 3.300l2-1.900" stroke="#fff" stroke-width="4.300" fill="none"/><path d="M.3 15.500l1.500-4.600 3 3.200z" fill="#fff"/></svg>申请列表</span><span class="btn b1"><svg width="17" height="16" viewBox="0 0 17 16" style="vertical-align:-3px;margin-right:3px;margin-left:-1px"><path d="M3.900 11.900L12 4.200" stroke="#fff" stroke-width="4.300" fill="none"/><path d="M13 3.300l2-1.900" stroke="#fff" stroke-width="4.300" fill="none"/><path d="M.3 15.500l1.500-4.600 3 3.200z" fill="#fff"/></svg>编辑</span><span class="btn b2"><svg width="14" height="14" viewBox="0 0 14 14" style="vertical-align:-1.500px;margin-right:4px;margin-left:1px"><path d="M2 2l10 10M12 2L2 12" stroke="#fff" stroke-width="3.900" fill="none"/></svg>删除</span></td></tr>
<tr><td>4</td><td><a>第19届舞动人生晚会</a></td><td><span class="img"><svg class="abs" style="left:2px;top:1.500px" width="20" height="20" viewBox="0 0 20 20"><path d="M.8 .8h12.900l5.500 4.900v13.500H.8z" fill="#c7d9f1" stroke="#808080" stroke-width="1.500" stroke-linejoin="miter"/><path d="M13.400 .8v5.200h5.800z" fill="#fff" stroke="#808080" stroke-width="1.200" stroke-linejoin="round"/><ellipse cx="7.300" cy="5" rx="3.300" ry="1.700" fill="#f6fcff"/><path d="M2.300 18.500v-1.500c1.500-3.500 4.500-5.500 8-5 1.500.2 2.800 1 4 2l4 3.200v1.300z" fill="#4eae32"/><path d="M14 18.500l4.300-4v4z" fill="#7e9a76"/><path d="M8 20.500L20.500 9.500v3.300L12 20.500z" fill="#fff"/><path d="M19.500 10.200l1 -.9v4l-1 .8z" fill="#fff"/></svg></span></td><td>2021-11-29 06:15:27</td><td>2021-11-30 06:15:30</td><td>苏只</td><td>是</td><td>舞蹈社</td><td><a class="g">审核通过</a></td><td><span class="btn b1"><svg width="17" height="16" viewBox="0 0 17 16" style="vertical-align:-3px;margin-right:3px;margin-left:-1px"><path d="M3.900 11.900L12 4.200" stroke="#fff" stroke-width="4.300" fill="none"/><path d="M13 3.300l2-1.900" stroke="#fff" stroke-width="4.300" fill="none"/><path d="M.3 15.500l1.500-4.600 3 3.200z" fill="#fff"/></svg>申请列表</span><span class="btn b1"><svg width="17" height="16" viewBox="0 0 17 16" style="vertical-align:-3px;margin-right:3px;margin-left:-1px"><path d="M3.900 11.900L12 4.200" stroke="#fff" stroke-width="4.300" fill="none"/><path d="M13 3.300l2-1.900" stroke="#fff" stroke-width="4.300" fill="none"/><path d="M.3 15.500l1.500-4.600 3 3.200z" fill="#fff"/></svg>编辑</span><span class="btn b2"><svg width="14" height="14" viewBox="0 0 14 14" style="vertical-align:-1.500px;margin-right:4px;margin-left:1px"><path d="M2 2l10 10M12 2L2 12" stroke="#fff" stroke-width="3.900" fill="none"/></svg>删除</span></td></tr>
<tr><td>5</td><td><a>太极公益，健康传承</a></td><td><span class="img"><svg class="abs" style="left:2px;top:1.500px" width="20" height="20" viewBox="0 0 20 20"><path d="M.8 .8h12.900l5.500 4.900v13.500H.8z" fill="#c7d9f1" stroke="#808080" stroke-width="1.500" stroke-linejoin="miter"/><path d="M13.400 .8v5.200h5.800z" fill="#fff" stroke="#808080" stroke-width="1.200" stroke-linejoin="round"/><ellipse cx="7.300" cy="5" rx="3.300" ry="1.700" fill="#f6fcff"/><path d="M2.300 18.500v-1.500c1.500-3.500 4.500-5.500 8-5 1.500.2 2.800 1 4 2l4 3.200v1.300z" fill="#4eae32"/><path d="M14 18.500l4.300-4v4z" fill="#7e9a76"/><path d="M8 20.500L20.500 9.500v3.300L12 20.500z" fill="#fff"/><path d="M19.500 10.200l1 -.9v4l-1 .8z" fill="#fff"/></svg></span></td><td>2021-11-29 05:54:10</td><td>2021-11-07 05:54:14</td><td>苏若</td><td>是</td><td>武术社</td><td><a class="g">审核通过</a></td><td><span class="btn b1"><svg width="17" height="16" viewBox="0 0 17 16" style="vertical-align:-3px;margin-right:3px;margin-left:-1px"><path d="M3.900 11.900L12 4.200" stroke="#fff" stroke-width="4.300" fill="none"/><path d="M13 3.300l2-1.900" stroke="#fff" stroke-width="4.300" fill="none"/><path d="M.3 15.500l1.500-4.600 3 3.200z" fill="#fff"/></svg>申请列表</span><span class="btn b1"><svg width="17" height="16" viewBox="0 0 17 16" style="vertical-align:-3px;margin-right:3px;margin-left:-1px"><path d="M3.900 11.900L12 4.200" stroke="#fff" stroke-width="4.300" fill="none"/><path d="M13 3.300l2-1.900" stroke="#fff" stroke-width="4.300" fill="none"/><path d="M.3 15.500l1.500-4.600 3 3.200z" fill="#fff"/></svg>编辑</span><span class="btn b2"><svg width="14" height="14" viewBox="0 0 14 14" style="vertical-align:-1.500px;margin-right:4px;margin-left:1px"><path d="M2 2l10 10M12 2L2 12" stroke="#fff" stroke-width="3.900" fill="none"/></svg>删除</span></td></tr>
<tr><td>6</td><td><a>校园爱心筹</a></td><td><span class="img"><svg class="abs" style="left:2px;top:1.500px" width="20" height="20" viewBox="0 0 20 20"><path d="M.8 .8h12.900l5.500 4.900v13.500H.8z" fill="#c7d9f1" stroke="#808080" stroke-width="1.500" stroke-linejoin="miter"/><path d="M13.400 .8v5.200h5.800z" fill="#fff" stroke="#808080" stroke-width="1.200" stroke-linejoin="round"/><ellipse cx="7.300" cy="5" rx="3.300" ry="1.700" fill="#f6fcff"/><path d="M2.300 18.500v-1.500c1.500-3.500 4.500-5.500 8-5 1.500.2 2.800 1 4 2l4 3.200v1.300z" fill="#4eae32"/><path d="M14 18.500l4.300-4v4z" fill="#7e9a76"/><path d="M8 20.500L20.500 9.500v3.300L12 20.500z" fill="#fff"/><path d="M19.500 10.200l1 -.9v4l-1 .8z" fill="#fff"/></svg></span></td><td>2021-11-28 05:43:45</td><td>2021-11-03 05:43:47</td><td>苏生</td><td>是</td><td>红十字协会社团</td><td><a class="g">审核通过</a></td><td><span class="btn b1"><svg width="17" height="16" viewBox="0 0 17 16" style="vertical-align:-3px;margin-right:3px;margin-left:-1px"><path d="M3.900 11.900L12 4.200" stroke="#fff" stroke-width="4.300" fill="none"/><path d="M13 3.300l2-1.900" stroke="#fff" stroke-width="4.300" fill="none"/><path d="M.3 15.500l1.500-4.600 3 3.200z" fill="#fff"/></svg>申请列表</span><span class="btn b1"><svg width="17" height="16" viewBox="0 0 17 16" style="vertical-align:-3px;margin-right:3px;margin-left:-1px"><path d="M3.900 11.900L12 4.200" stroke="#fff" stroke-width="4.300" fill="none"/><path d="M13 3.300l2-1.900" stroke="#fff" stroke-width="4.300" fill="none"/><path d="M.3 15.500l1.500-4.600 3 3.200z" fill="#fff"/></svg>编辑</span><span class="btn b2"><svg width="14" height="14" viewBox="0 0 14 14" style="vertical-align:-1.500px;margin-right:4px;margin-left:1px"><path d="M2 2l10 10M12 2L2 12" stroke="#fff" stroke-width="3.900" fill="none"/></svg>删除</span></td></tr>
<tr><td>7</td><td><a>2019暑期志愿者活动</a></td><td><span class="img"><svg class="abs" style="left:2px;top:1.500px" width="20" height="20" viewBox="0 0 20 20"><path d="M.8 .8h12.900l5.500 4.900v13.500H.8z" fill="#c7d9f1" stroke="#808080" stroke-width="1.500" stroke-linejoin="miter"/><path d="M13.400 .8v5.200h5.800z" fill="#fff" stroke="#808080" stroke-width="1.200" stroke-linejoin="round"/><ellipse cx="7.300" cy="5" rx="3.300" ry="1.700" fill="#f6fcff"/><path d="M2.300 18.500v-1.500c1.500-3.500 4.500-5.500 8-5 1.500.2 2.800 1 4 2l4 3.200v1.300z" fill="#4eae32"/><path d="M14 18.500l4.300-4v4z" fill="#7e9a76"/><path d="M8 20.500L20.500 9.500v3.300L12 20.500z" fill="#fff"/><path d="M19.500 10.200l1 -.9v4l-1 .8z" fill="#fff"/></svg></span></td><td>2021-11-28 05:16:35</td><td>2021-11-30 05:16:38</td><td>苏人1</td><td>是</td><td>青年社团</td><td><a class="g">审核通过</a></td><td><span class="btn b1"><svg width="17" height="16" viewBox="0 0 17 16" style="vertical-align:-3px;margin-right:3px;margin-left:-1px"><path d="M3.900 11.900L12 4.200" stroke="#fff" stroke-width="4.300" fill="none"/><path d="M13 3.300l2-1.900" stroke="#fff" stroke-width="4.300" fill="none"/><path d="M.3 15.500l1.500-4.600 3 3.200z" fill="#fff"/></svg>申请列表</span><span class="btn b1"><svg width="17" height="16" viewBox="0 0 17 16" style="vertical-align:-3px;margin-right:3px;margin-left:-1px"><path d="M3.900 11.900L12 4.200" stroke="#fff" stroke-width="4.300" fill="none"/><path d="M13 3.300l2-1.900" stroke="#fff" stroke-width="4.300" fill="none"/><path d="M.3 15.500l1.500-4.600 3 3.200z" fill="#fff"/></svg>编辑</span><span class="btn b2"><svg width="14" height="14" viewBox="0 0 14 14" style="vertical-align:-1.500px;margin-right:4px;margin-left:1px"><path d="M2 2l10 10M12 2L2 12" stroke="#fff" stroke-width="3.900" fill="none"/></svg>删除</span></td></tr>
<tr><td>8</td><td><a></a></td><td><span class="img"><svg class="abs" style="left:2px;top:1.500px" width="20" height="20" viewBox="0 0 20 20"><path d="M.8 .8h12.900l5.500 4.900v13.500H.8z" fill="#c7d9f1" stroke="#808080" stroke-width="1.500" stroke-linejoin="miter"/><path d="M13.400 .8v5.200h5.800z" fill="#fff" stroke="#808080" stroke-width="1.200" stroke-linejoin="round"/><ellipse cx="7.300" cy="5" rx="3.300" ry="1.700" fill="#f6fcff"/><path d="M2.300 18.500v-1.500c1.500-3.500 4.500-5.500 8-5 1.500.2 2.800 1 4 2l4 3.200v1.300z" fill="#4eae32"/><path d="M14 18.500l4.300-4v4z" fill="#7e9a76"/><path d="M8 20.500L20.500 9.500v3.300L12 20.500z" fill="#fff"/><path d="M19.500 10.200l1 -.9v4l-1 .8z" fill="#fff"/></svg></span></td><td></td><td></td><td></td><td>是</td><td></td><td><a class="g">审核通过</a></td><td><span class="btn b1"><svg width="17" height="16" viewBox="0 0 17 16" style="vertical-align:-3px;margin-right:3px;margin-left:-1px"><path d="M3.900 11.900L12 4.200" stroke="#fff" stroke-width="4.300" fill="none"/><path d="M13 3.300l2-1.900" stroke="#fff" stroke-width="4.300" fill="none"/><path d="M.3 15.500l1.500-4.600 3 3.200z" fill="#fff"/></svg>申请列表</span><span class="btn b1"><svg width="17" height="16" viewBox="0 0 17 16" style="vertical-align:-3px;margin-right:3px;margin-left:-1px"><path d="M3.900 11.900L12 4.200" stroke="#fff" stroke-width="4.300" fill="none"/><path d="M13 3.300l2-1.900" stroke="#fff" stroke-width="4.300" fill="none"/><path d="M.3 15.500l1.500-4.600 3 3.200z" fill="#fff"/></svg>编辑</span><span class="btn b2"><svg width="14" height="14" viewBox="0 0 14 14" style="vertical-align:-1.500px;margin-right:4px;margin-left:1px"><path d="M2 2l10 10M12 2L2 12" stroke="#fff" stroke-width="3.900" fill="none"/></svg>删除</span></td></tr>
</tbody></table>
  </div>
</div>
<svg id="cursor" class="abs" style="left:647px;top:645px;z-index:50" width="14" height="21" viewBox="0 0 14 21"><path d="M1 1v15.500l3.600-3.400 2.600 6 2.300-1-2.600-5.800h5z" fill="#fff" stroke="#000" stroke-width="1.100" stroke-linejoin="miter"/></svg>
<div id="vscroll"><svg class="abs" style="left:5.500px;top:6px" width="8" height="5" viewBox="0 0 8 5"><path d="M0 5L4 0l4 5z" fill="#505050"/></svg><svg class="abs" style="left:5.500px;top:731px" width="8" height="5" viewBox="0 0 8 5"><path d="M0 0l4 5 4-5z" fill="#505050"/></svg></div><div id="bottom"></div>
</body>
</html>
